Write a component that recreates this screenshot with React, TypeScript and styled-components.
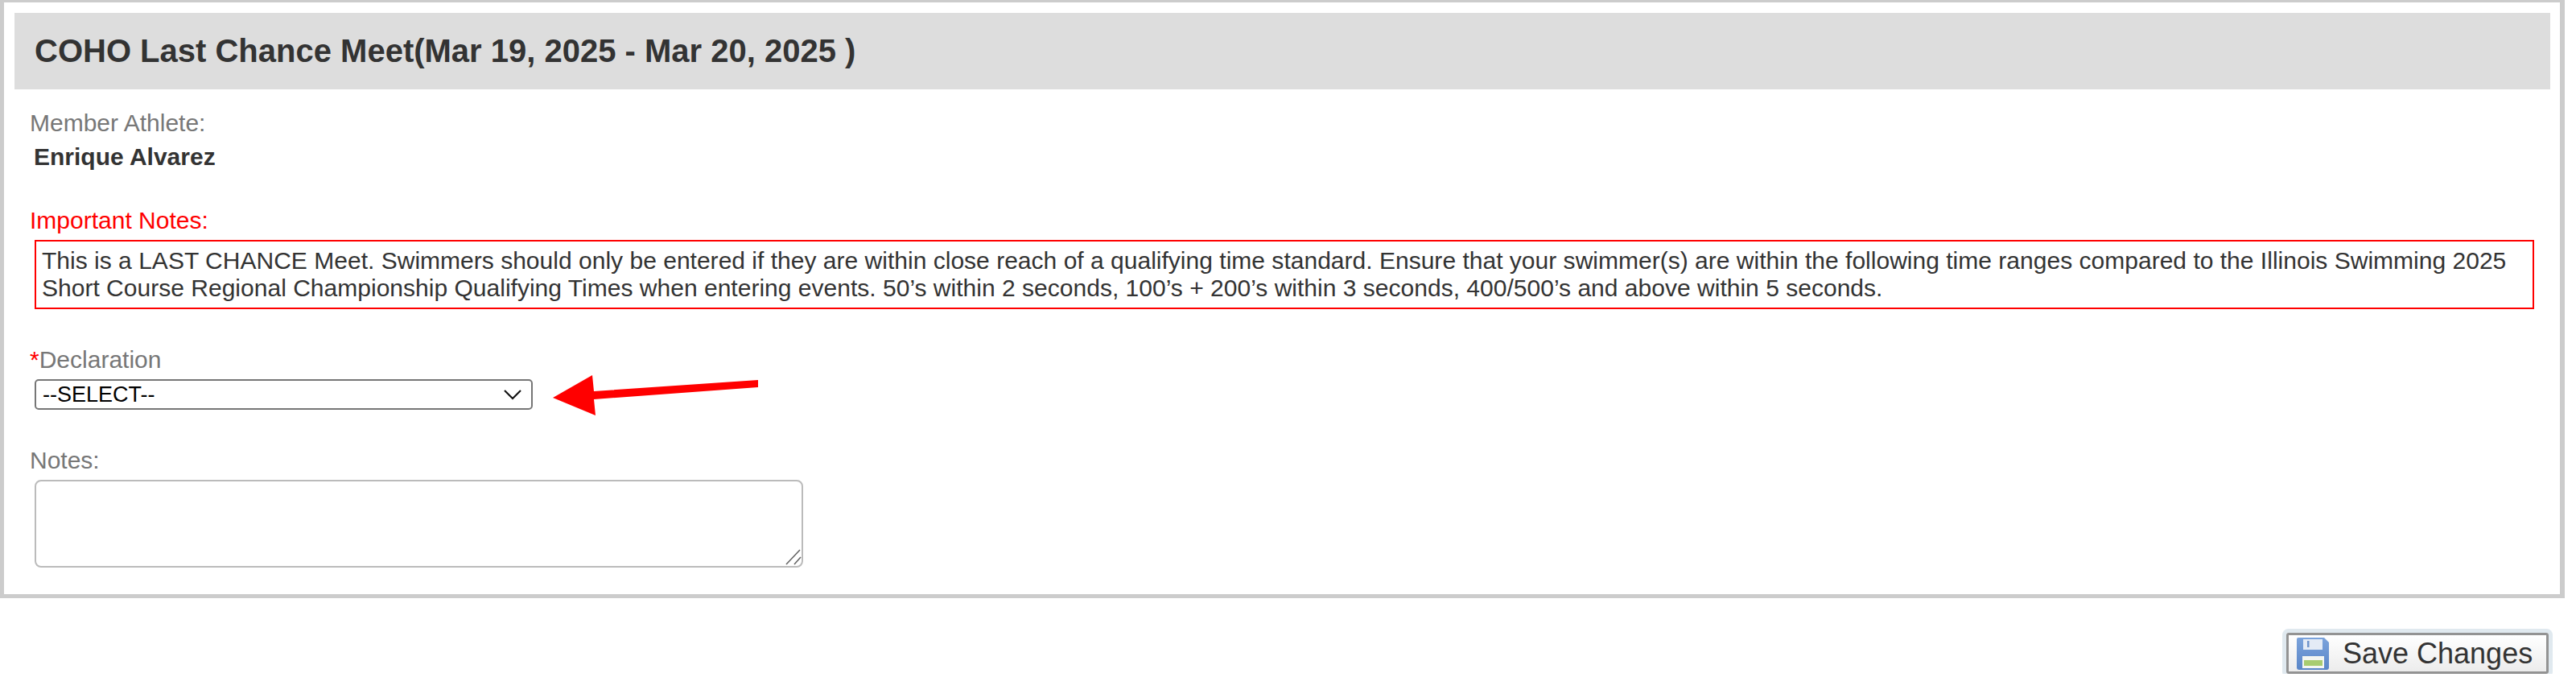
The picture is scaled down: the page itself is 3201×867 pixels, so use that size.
import React from "react";
import styled, { createGlobalStyle } from "styled-components";

const Global = createGlobalStyle`
  html, body { margin: 0; padding: 0; background: #fff; }
  body { font-family: "Liberation Sans", Arial, sans-serif; color: #333; overflow: hidden; }
`;

const Panel = styled.section`
  box-sizing: border-box;
  width: 3187px;
  height: 743px;
  border: solid #ccc;
  border-width: 3px 6px 5px 5px;
  padding: 13px 12px 0 13px;
`;

const Header = styled.header`
  height: 95px;
  background: #ddd;
  display: flex;
  align-items: center;
  padding-left: 25px;
`;

const Title = styled.h1`
  margin: 0;
  font-size: 40px;
  font-weight: 700;
  color: #333;
`;

const Body = styled.div`
  padding: 25px 0 0 19px;
`;

const Label = styled.div<{ $color?: string }>`
  font-size: 30px;
  line-height: 34px;
  color: ${(p) => p.$color ?? "#777"};
`;

const Value = styled.div`
  font-size: 30px;
  line-height: 34px;
  font-weight: 700;
  color: #333;
  margin: 8px 0 0 5px;
`;

const NotesHeading = styled(Label)`
  margin-top: 45px;
`;

const NoticeBox = styled.div`
  box-sizing: border-box;
  width: 3106px;
  height: 86px;
  margin: 7px 0 0 6px;
  padding: 7px 7px;
  border: 2px solid #f00;
  font-size: 30.04px;
  line-height: 33.6px;
  color: #333;
`;

const Required = styled.span`
  color: #f00;
`;

const DeclarationLabel = styled(Label)`
  margin-top: 46px;
`;

const SelectRow = styled.div`
  position: relative;
  width: 619px;
  height: 38px;
  margin: 7px 0 0 6px;
`;

const Select = styled.select`
  appearance: none;
  box-sizing: border-box;
  display: block;
  width: 100%;
  height: 100%;
  margin: 0;
  padding: 0 8px;
  border: 2px solid #767676;
  border-radius: 5px;
  background: #fff;
  font-family: "Liberation Sans", Arial, sans-serif;
  font-size: 27px;
  color: #000;
`;

const Chevron = styled.svg`
  position: absolute;
  left: 582px;
  top: 12px;
  pointer-events: none;
`;

const Arrow = styled.svg`
  position: absolute;
  left: 643px;
  top: -6px;
`;

const NotesLabel = styled(Label)`
  margin-top: 46px;
`;

const TextareaWrap = styled.div`
  position: relative;
  width: 955px;
  height: 109px;
  margin: 7px 0 0 6px;
`;

const Textarea = styled.textarea`
  box-sizing: border-box;
  display: block;
  width: 100%;
  height: 100%;
  margin: 0;
  border: 2px solid #bbb;
  border-radius: 8px;
  resize: none;
  background: #fff;
`;

const Grip = styled.svg`
  position: absolute;
  right: 2px;
  bottom: 3px;
  pointer-events: none;
`;

const Footer = styled.div`
  display: flex;
  justify-content: flex-end;
  width: 3201px;
  box-sizing: border-box;
  padding: 43px 34px 0 0;
`;

const SaveButton = styled.button`
  box-sizing: border-box;
  display: flex;
  align-items: center;
  gap: 17px;
  width: 326px;
  height: 51px;
  padding: 0 0 0 10px;
  border: 3px solid #939393;
  border-radius: 3px;
  background: linear-gradient(#fff, #ececec);
  box-shadow: 0 0 0 5px #e0e9ef;
  font-family: "Liberation Sans", Arial, sans-serif;
  font-size: 36px;
  line-height: 1;
  color: #333;
`;

export default function App() {
  return (
    <>
      <Global />
      <Panel>
        <Header>
          <Title>COHO Last Chance Meet(Mar 19, 2025 - Mar 20, 2025 )</Title>
        </Header>
        <Body>
          <Label>Member Athlete:</Label>
          <Value>Enrique Alvarez</Value>
          <NotesHeading $color="#f00">Important Notes:</NotesHeading>
          <NoticeBox>
            This is a LAST CHANCE Meet. Swimmers should only be entered if they are within close reach of a qualifying time standard. Ensure that your swimmer(s) are within the following time ranges compared to the Illinois Swimming 2025 Short Course Regional Championship Qualifying Times when entering events. 50’s within 2 seconds, 100’s + 200’s within 3 seconds, 400/500’s and above within 5 seconds.
          </NoticeBox>
          <DeclarationLabel>
            <Required>*</Required>Declaration
          </DeclarationLabel>
          <SelectRow>
            <Select defaultValue="">
              <option value="">--SELECT--</option>
            </Select>
            <Chevron width="24" height="14" viewBox="0 0 24 14">
              <path d="M2 2 L12 12 L22 2" fill="none" stroke="#111" strokeWidth="2.2" />
            </Chevron>
            <Arrow width="260" height="52" viewBox="0 0 260 52">
              <path d="M1 29 L50 1 L52 21 L256 7 L256 16 L52 31 L54 51 Z" fill="#f00" />
            </Arrow>
          </SelectRow>
          <NotesLabel>Notes:</NotesLabel>
          <TextareaWrap>
            <Textarea />
            <Grip width="20" height="20" viewBox="0 0 20 20">
              <path d="M1 19 L18 1 M11 19 L19 10" fill="none" stroke="#666" strokeWidth="1.6" />
            </Grip>
          </TextareaWrap>
        </Body>
      </Panel>
      <Footer>
        <SaveButton type="button">
          <svg width="40" height="40" viewBox="0 0 40 40">
            <defs>
              <linearGradient id="disk" x1="0" y1="0" x2="0" y2="1">
                <stop offset="0" stopColor="#7ba3dc" />
                <stop offset="1" stopColor="#5a86c8" />
              </linearGradient>
            </defs>
            <path d="M2 0 H34 L40 6 V37 a3 3 0 0 1 -3 3 H3 a3 3 0 0 1 -3 -3 V2 a2 2 0 0 1 2 -2 Z" fill="url(#disk)" />
            <rect x="8" y="2" width="24" height="13" fill="#e4ebf6" />
            <rect x="13" y="4" width="2.5" height="8" fill="#6f94cc" />
            <rect x="7" y="23" width="27" height="15" fill="#f4f6f2" />
            <rect x="9" y="28" width="23" height="7" fill="#a8cc70" />
          </svg>
          Save Changes
        </SaveButton>
      </Footer>
    </>
  );
}
